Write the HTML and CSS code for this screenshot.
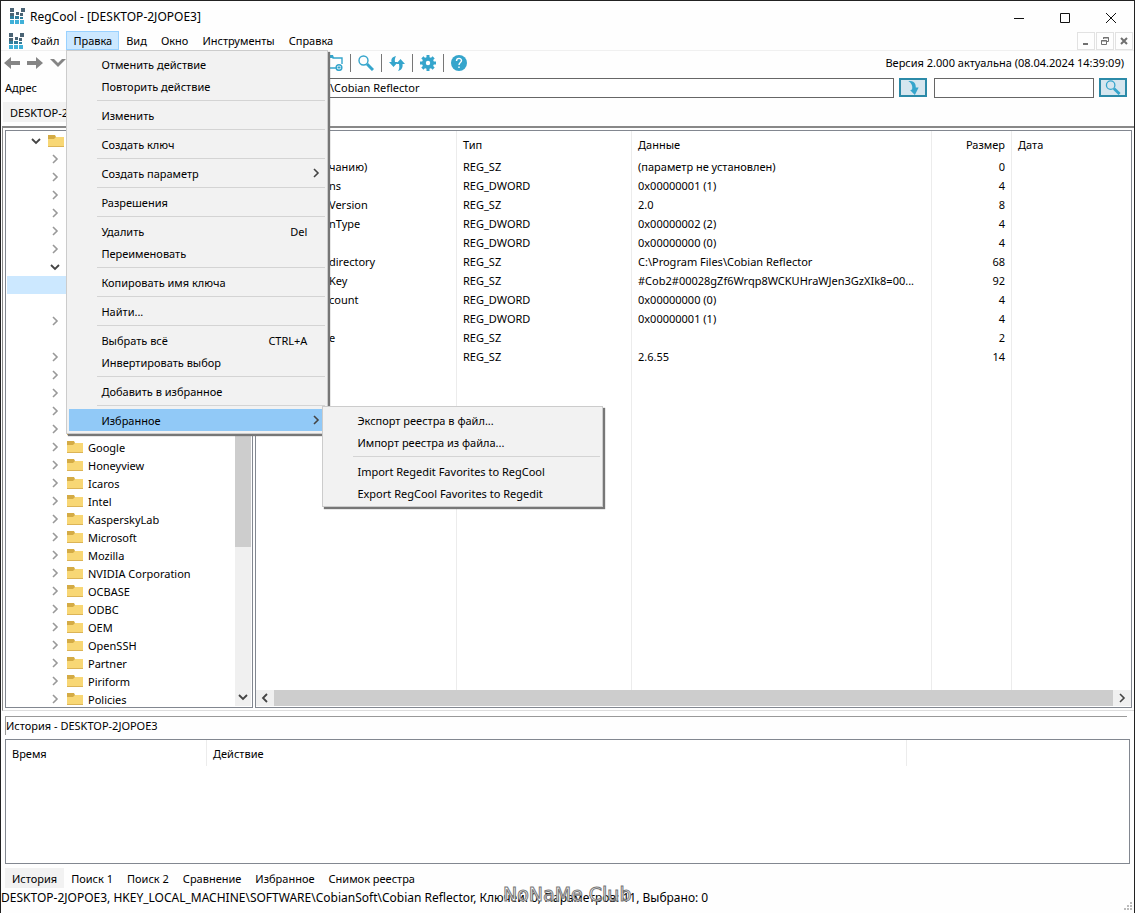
FILE: index.html
```html
<!DOCTYPE html>
<html lang="ru">
<head>
    <meta charset="UTF-8">
    <meta name="viewport" content="width=device-width, initial-scale=1.0">
    <title>RegCool - [DESKTOP-2JOPOE3]</title>
    <link rel="stylesheet" href="styles.css">
</head>
<body>
    <!-- общие значки -->
    <svg class="defs" width="0" height="0" aria-hidden="true">
        <symbol id="logo" viewBox="0 0 16 16">
            <g fill="#4a6374"><path d="M1 0h4v4h-4zM12 0h4v4h-4zM7 4h3v3h-3zM1 5h4v3h-4zM11 5h3v3h-3z"/></g>
            <g fill="#2f7d9c"><path d="M1 8h4v3h-4zM6 8h4v3h-4zM11 9h3v2h-3z"/></g>
            <g fill="#3fb0d8"><path d="M1 12h4v4h-4zM6 12h4v4h-4zM11 12h4v4h-4z"/></g>
        </symbol>
        <symbol id="folder" viewBox="0 0 17 14">
            <path fill="#d4ab45" d="M0 1h7l1 2h8v3H0z"/>
            <path fill="#f8d775" d="M0 5h6l2-2h8v10H0z"/>
            <path fill="#dcb456" d="M0 12h16v1H0z"/>
        </symbol>
        <symbol id="right" viewBox="0 0 10 10">
            <path d="M3 1l4 4l-4 4" fill="none" stroke="currentColor" stroke-width="1.600"/>
        </symbol>
        <symbol id="down" viewBox="0 0 10 10">
            <path d="M1 3l4 4l4-4" fill="none" stroke="currentColor" stroke-width="1.800"/>
        </symbol>
        <symbol id="left" viewBox="0 0 10 10">
            <path d="M7 1l-4 4l4 4" fill="none" stroke="currentColor" stroke-width="1.800"/>
        </symbol>
        <symbol id="lens" viewBox="0 0 16 16">
            <circle cx="5.500" cy="5.500" r="4.500" fill="none" stroke="currentColor" stroke-width="1.400"/>
            <path d="M9 9l6 6" stroke="currentColor" stroke-width="3"/>
        </symbol>
    </svg>

    <div class="window">
        <header class="titlebar">
            <svg class="logo"><use href="#logo"/></svg>
            <h1>RegCool - [DESKTOP-2JOPOE3]</h1>
            <div class="win-buttons">
                <button aria-label="Свернуть"><svg viewBox="0 0 12 12"><path d="M1 6.500h10"/></svg></button>
                <button aria-label="Развернуть"><svg viewBox="0 0 12 12"><path d="M1.500 1.500h9v9h-9z"/></svg></button>
                <button aria-label="Закрыть"><svg viewBox="0 0 12 12"><path d="M1 1l10 10M11 1l-10 10"/></svg></button>
            </div>
        </header>

        <nav class="menubar">
            <svg class="logo"><use href="#logo"/></svg>
            <button>Файл</button>
            <div class="menu-holder">
                <button class="open">Правка</button>
                <div class="menu">
                    <button>Отменить действие</button>
                    <button>Повторить действие</button>
                    <hr>
                    <button>Изменить</button>
                    <hr>
                    <button>Создать ключ</button>
                    <hr>
                    <button>Создать параметр<svg class="arrow"><use href="#right"/></svg></button>
                    <hr>
                    <button>Разрешения</button>
                    <hr>
                    <button>Удалить<kbd>Del</kbd></button>
                    <button>Переименовать</button>
                    <hr>
                    <button>Копировать имя ключа</button>
                    <hr>
                    <button>Найти...</button>
                    <hr>
                    <button>Выбрать всё<kbd>CTRL+A</kbd></button>
                    <button>Инвертировать выбор</button>
                    <hr>
                    <button>Добавить в избранное</button>
                    <hr>
                    <button class="active">Избранное<svg class="arrow"><use href="#right"/></svg></button>
                    <div class="menu submenu">
                        <button>Экспорт реестра в файл...</button>
                        <button>Импорт реестра из файла...</button>
                        <hr>
                        <button>Import Regedit Favorites to RegCool</button>
                        <button>Export RegCool Favorites to Regedit</button>
                    </div>
                </div>
            </div>
            <button>Вид</button>
            <button>Окно</button>
            <button>Инструменты</button>
            <button>Справка</button>
            <div class="mdi-buttons">
                <button aria-label="Свернуть документ"><svg viewBox="0 0 10 10"><path d="M2 8h5" stroke-width="2"/></svg></button>
                <button aria-label="Восстановить документ"><svg viewBox="0 0 10 10"><path d="M3.500 3V1.500h5v4H7M1.500 4.500h5v4h-5zM1 5h6M3 2h6"/></svg></button>
                <button aria-label="Закрыть документ"><svg viewBox="0 0 10 10"><path d="M2 2l6 6M8 2l-6 6" stroke-width="2"/></svg></button>
            </div>
        </nav>

        <div class="toolbar">
            <div class="history-nav">
                <button aria-label="Назад"><svg viewBox="0 0 16 12"><path d="M0 6l7-6v4h9v4H7v4z"/></svg></button>
                <button aria-label="Вперёд"><svg viewBox="0 0 16 12"><path d="M16 6L9 0v4H0v4h9v4z"/></svg></button>
                <button aria-label="Список"><svg viewBox="0 0 16 12"><path d="M0 2h4l4 4l4-4h4l-8 8z"/></svg></button>
            </div>
            <div class="tools">
                <button aria-label="Новый ключ">
                    <svg viewBox="0 0 16 16"><path d="M0 1h5l1 2h9v6M0 13h9" fill="none" stroke="currentColor" stroke-width="1.400"/><path d="M0 0h6l1 3H0z" fill="currentColor"/><circle cx="12" cy="12.500" r="2.800" fill="#fff" stroke="currentColor" stroke-width="1.500"/><path d="M10.500 12.500h3M12 11v3" stroke="currentColor"/></svg>
                </button>
                <button aria-label="Найти"><svg><use href="#lens"/></svg></button>
                <button aria-label="Обновить">
                    <svg viewBox="0 0 16 16"><g fill="currentColor"><path d="M7 1C3 2 2 4 2.500 7H0l4.500 5L9 7H6C5.500 5 6 3 7 1z"/><path d="M9 16c4-1 5-4 4.500-7H16l-4.500-5L7 9h3c.5 3 .5 5-1 7z"/></g></svg>
                </button>
                <button aria-label="Настройки">
                    <svg viewBox="0 0 16 16"><g fill="currentColor"><circle cx="8" cy="8" r="6"/><path d="M6.500 0h3v16h-3zM0 6.500h16v3H0zM1.300 3.400l2.100-2.100L14.700 12.600l-2.100 2.100zM12.600 1.300l2.100 2.100L3.400 14.700l-2.100-2.100z"/></g><circle cx="8" cy="8" r="2.200" fill="#fff"/></svg>
                </button>
                <button aria-label="Справка">
                    <svg viewBox="0 0 16 16"><circle cx="8" cy="8" r="8" fill="currentColor"/><path d="M5.500 6c0-3.600 5-3.200 5-.5C10.500 7.500 8 7.500 8 10M8 11.500v1.500" fill="none" stroke="#fff" stroke-width="1.400"/></svg>
                </button>
            </div>
            <p class="version">Версия 2.000 актуальна (08.04.2024 14:39:09)</p>
        </div>

        <div class="address">
            <label for="path">Адрес</label>
            <input id="path" class="path" type="text" value="\Cobian Reflector">
            <button aria-label="Перейти"><svg viewBox="0 0 16 16"><path fill="#35a5cc" d="M3 1c6 0 8 2 8 7h3l-4 8l-5-5l2-1C8 6 6 3 3 1z"/></svg></button>
            <input class="search" type="text" aria-label="Поиск">
            <button aria-label="Искать"><svg><use href="#lens"/></svg></button>
        </div>

        <div class="doc-tabs"><button>DESKTOP-2JOPOE3</button></div>

        <main class="workspace">
            <section class="pane tree">
                <ul>
                    <li class="root"><svg class="chev dark"><use href="#down"/></svg><svg class="folder"><use href="#folder"/></svg></li>
                    <li><svg class="chev"><use href="#right"/></svg></li>
                    <li><svg class="chev"><use href="#right"/></svg></li>
                    <li><svg class="chev"><use href="#right"/></svg></li>
                    <li><svg class="chev"><use href="#right"/></svg></li>
                    <li><svg class="chev"><use href="#right"/></svg></li>
                    <li><svg class="chev"><use href="#right"/></svg></li>
                    <li><svg class="chev dark"><use href="#down"/></svg></li>
                    <li class="selected"></li>
                    <li></li>
                    <li><svg class="chev"><use href="#right"/></svg></li>
                    <li></li>
                    <li><svg class="chev"><use href="#right"/></svg></li>
                    <li><svg class="chev"><use href="#right"/></svg></li>
                    <li><svg class="chev"><use href="#right"/></svg></li>
                    <li><svg class="chev"><use href="#right"/></svg></li>
                    <li><svg class="chev"><use href="#right"/></svg><svg class="folder"><use href="#folder"/></svg></li>
                    <li><svg class="chev"><use href="#right"/></svg><svg class="folder"><use href="#folder"/></svg>Google</li>
                    <li><svg class="chev"><use href="#right"/></svg><svg class="folder"><use href="#folder"/></svg>Honeyview</li>
                    <li><svg class="chev"><use href="#right"/></svg><svg class="folder"><use href="#folder"/></svg>Icaros</li>
                    <li><svg class="chev"><use href="#right"/></svg><svg class="folder"><use href="#folder"/></svg>Intel</li>
                    <li><svg class="chev"><use href="#right"/></svg><svg class="folder"><use href="#folder"/></svg>KasperskyLab</li>
                    <li><svg class="chev"><use href="#right"/></svg><svg class="folder"><use href="#folder"/></svg>Microsoft</li>
                    <li><svg class="chev"><use href="#right"/></svg><svg class="folder"><use href="#folder"/></svg>Mozilla</li>
                    <li><svg class="chev"><use href="#right"/></svg><svg class="folder"><use href="#folder"/></svg>NVIDIA Corporation</li>
                    <li><svg class="chev"><use href="#right"/></svg><svg class="folder"><use href="#folder"/></svg>OCBASE</li>
                    <li><svg class="chev"><use href="#right"/></svg><svg class="folder"><use href="#folder"/></svg>ODBC</li>
                    <li><svg class="chev"><use href="#right"/></svg><svg class="folder"><use href="#folder"/></svg>OEM</li>
                    <li><svg class="chev"><use href="#right"/></svg><svg class="folder"><use href="#folder"/></svg>OpenSSH</li>
                    <li><svg class="chev"><use href="#right"/></svg><svg class="folder"><use href="#folder"/></svg>Partner</li>
                    <li><svg class="chev"><use href="#right"/></svg><svg class="folder"><use href="#folder"/></svg>Piriform</li>
                    <li><svg class="chev"><use href="#right"/></svg><svg class="folder"><use href="#folder"/></svg>Policies</li>
                </ul>
                <div class="vscroll">
                    <div class="thumb"></div>
                    <svg><use href="#down"/></svg>
                </div>
            </section>

            <section class="pane values">
                <div class="table-wrap">
                    <table>
                        <colgroup><col class="c-name"><col class="c-type"><col class="c-data"><col class="c-size"><col></colgroup>
                        <thead>
                            <tr><th></th><th>Тип</th><th>Данные</th><th>Размер</th><th>Дата</th></tr>
                        </thead>
                        <tbody>
                            <tr><td>чанию)</td><td>REG_SZ</td><td>(параметр не установлен)</td><td>0</td><td></td></tr>
                            <tr><td>ns</td><td>REG_DWORD</td><td>0x00000001 (1)</td><td>4</td><td></td></tr>
                            <tr><td>Version</td><td>REG_SZ</td><td>2.0</td><td>8</td><td></td></tr>
                            <tr><td>nType</td><td>REG_DWORD</td><td>0x00000002 (2)</td><td>4</td><td></td></tr>
                            <tr><td></td><td>REG_DWORD</td><td>0x00000000 (0)</td><td>4</td><td></td></tr>
                            <tr><td>directory</td><td>REG_SZ</td><td>C:\Program Files\Cobian Reflector</td><td>68</td><td></td></tr>
                            <tr><td>Key</td><td>REG_SZ</td><td>#Cob2#00028gZf6Wrqp8WCKUHraWJen3GzXIk8=00...</td><td>92</td><td></td></tr>
                            <tr><td>count</td><td>REG_DWORD</td><td>0x00000000 (0)</td><td>4</td><td></td></tr>
                            <tr><td></td><td>REG_DWORD</td><td>0x00000001 (1)</td><td>4</td><td></td></tr>
                            <tr><td>e</td><td>REG_SZ</td><td></td><td>2</td><td></td></tr>
                            <tr><td></td><td>REG_SZ</td><td>2.6.55</td><td>14</td><td></td></tr>
                            <tr class="filler"><td></td><td></td><td></td><td></td><td></td></tr>
                        </tbody>
                    </table>
                </div>
                <div class="hscroll">
                    <svg><use href="#left"/></svg>
                    <div class="thumb"></div>
                    <svg><use href="#right"/></svg>
                </div>
            </section>
        </main>

        <section class="history">
            <h2>История - DESKTOP-2JOPOE3</h2>
            <div class="history-box">
                <table>
                    <colgroup><col class="c-time"><col class="c-action"><col></colgroup>
                    <thead><tr><th>Время</th><th>Действие</th><th></th></tr></thead>
                </table>
            </div>
        </section>

        <div class="bottom-tabs">
            <button class="current">История</button>
            <button>Поиск 1</button>
            <button>Поиск 2</button>
            <button>Сравнение</button>
            <button>Избранное</button>
            <button>Снимок реестра</button>
        </div>

        <footer class="status">
            <p>DESKTOP-2JOPOE3, HKEY_LOCAL_MACHINE\SOFTWARE\CobianSoft\Cobian Reflector, Ключей: 0, Параметров: 11, Выбрано: 0</p>
            <svg class="grip" viewBox="0 0 9 9"><path d="M6 0h2v2h-2zM3 3h2v2h-2zM6 3h2v2h-2zM0 6h2v2h-2zM3 6h2v2h-2zM6 6h2v2h-2z"/></svg>
            <span class="watermark">NoNaMe Club</span>
        </footer>
    </div>
</body>
</html>
```
FILE: styles.css
```css
*{
    margin: 0;
    padding: 0;
    box-sizing: border-box;
}
body, button, input, kbd{
    font-family: "Noto Sans", "Open Sans", sans-serif;
    font-size: 11px;
    color: #000;
}
button{
    background: none;
    border: none;
    white-space: nowrap;
}
h1, h2, th{
    font-size: 11px;
    font-weight: normal;
}
.defs{
    position: absolute;
}
.window{
    display: flex;
    flex-direction: column;
    height: 100vh;
    min-height: 840px;
    background-color: #fefefe;
    border: 1px solid #222;
    border-bottom: none;
    overflow: hidden;
}
.logo{
    width: 16px;
    height: 16px;
    flex: none;
}

/* заголовок окна */
.titlebar{
    display: flex;
    align-items: center;
    height: 30px;
    padding-left: 8px;
    gap: 5px;
}
.titlebar h1{
    font-size: 12px;
}
.win-buttons{
    display: flex;
    margin-left: auto;
}
.win-buttons button{
    width: 46px;
    height: 28px;
}
.win-buttons svg{
    width: 12px;
    height: 12px;
    fill: none;
    stroke: #111;
    vertical-align: middle;
}

/* строка меню */
.menubar{
    display: flex;
    align-items: center;
    height: 20px;
    padding-left: 7px;
    border-bottom: 1px solid #f0f0f0;
}
.menubar > button, .menu-holder > button{
    height: 19px;
    padding: 0 7px;
}
.menu-holder{
    position: relative;
}
.menu-holder > .open{
    display: block;
    padding: 0 6px;
    background-color: #cce8ff;
    border: 1px solid #99d1ff;
}
.menu{
    position: absolute;
    z-index: 10;
    top: 19px;
    left: 0;
    width: 262px;
    padding: 2px;
    background-color: #f2f2f2;
    border: 1px solid #ccc;
    box-shadow: 2px 2px 1px #777;
}
.menu > button{
    display: flex;
    align-items: center;
    width: 100%;
    height: 22px;
    padding: 0 8px 0 32px;
}
.menu > .active{
    background-color: #91c9f7;
}
.menu hr{
    height: 1px;
    margin: 3px 0 3px 28px;
    border: none;
    background-color: #d4d4d4;
}
.menu kbd{
    margin-left: auto;
    margin-right: 10px;
}
.arrow{
    width: 10px;
    height: 10px;
    margin-left: auto;
    margin-right: -4px;
    color: #444;
}
.menu > .active .arrow{
    margin-right: -4px;
}
.submenu{
    top: auto;
    bottom: -74px;
    left: 255px;
    width: 281px;
}
.mdi-buttons{
    display: flex;
    gap: 1px;
    margin-left: auto;
    margin-right: 1px;
}
.mdi-buttons button{
    width: 18px;
    height: 18px;
    border: 1px solid #e2e2e2;
}
.mdi-buttons svg{
    display: block;
    width: 10px;
    height: 10px;
    margin: auto;
    fill: none;
    stroke: #707070;
}

/* панель инструментов */
.toolbar{
    display: flex;
    align-items: center;
    height: 23px;
    padding: 0 10px 0 3px;
}
.history-nav{
    display: flex;
    gap: 7px;
    width: 315px;
}
.history-nav button{
    width: 16px;
    height: 12px;
}
.history-nav svg{
    display: block;
    width: 16px;
    height: 12px;
    fill: #858585;
}
.tools{
    display: flex;
}
.tools button{
    width: 31px;
    height: 18px;
    color: #35a5cc;
}
.tools button + button{
    border-left: 1px solid #777;
}
.tools svg{
    display: block;
    width: 16px;
    height: 16px;
    margin: auto;
}
.version{
    margin-left: auto;
}
.address{
    display: flex;
    align-items: center;
    height: 27px;
    padding: 0 7px 0 4px;
}
.address label{
    width: 70px;
}
.address input{
    height: 20px;
    border: 1px solid #666;
    background-color: #fff;
}
.address .path{
    flex: 1;
    min-width: 0;
    padding-left: 254px;
}
.address .search{
    width: 160px;
}
.address button{
    width: 28px;
    height: 19px;
    margin: 0 7px 0 5px;
    border: 2px solid #2b8aa8;
    background-color: #d5e6ef;
    color: #35a5cc;
}
.address button:last-child{
    margin-right: 0;
}
.address svg{
    display: block;
    width: 16px;
    height: 15px;
    margin: auto;
}
.doc-tabs{
    height: 25px;
    padding: 1px 0 0 2px;
}
.doc-tabs button{
    height: 20px;
    padding: 0 7px;
    background-color: #f2f2f2;
}

/* рабочая область: дерево и значения */
.workspace{
    display: flex;
    flex: 1;
    min-height: 0;
    gap: 2px;
    margin-left: 1px;
    padding: 2px 2px 2px 2px;
    border-top: 2px solid #888;
    border-left: 1px solid #888;
    border-bottom: 1px solid #ddd;
}
.pane{
    display: flex;
    background-color: #fff;
    border: 1px solid #828790;
    overflow: hidden;
}
.tree{
    width: 248px;
    flex: none;
    padding: 1px;
}
.tree ul{
    flex: 1;
    list-style: none;
}
.tree li{
    display: flex;
    align-items: center;
    height: 18px;
    padding-left: 43px;
}
.tree .root{
    padding-left: 24px;
}
.tree .selected{
    background-color: #cce8ff;
}
.chev{
    width: 10px;
    height: 10px;
    margin-right: 7px;
    color: #999;
}
.dark{
    color: #444;
}
.folder{
    width: 17px;
    height: 14px;
    margin-right: 4px;
}
.vscroll{
    display: flex;
    flex-direction: column;
    align-items: center;
    width: 16px;
    padding: 17px 0 4px;
    background-color: #f0f0f0;
}
.vscroll .thumb{
    width: 16px;
    height: 398px;
    background-color: #cdcdcd;
}
.vscroll svg{
    width: 10px;
    height: 10px;
    margin-top: auto;
    color: #444;
}
.values{
    flex: 1;
    flex-direction: column;
    min-width: 0;
}
.table-wrap{
    flex: 1;
    min-height: 0;
}
table{
    width: 100%;
    table-layout: fixed;
    border-collapse: separate;
    border-spacing: 0;
}
th{
    text-align: left;
}
th, td{
    padding: 0 6px;
    white-space: nowrap;
    overflow: hidden;
    border-right: 1px solid #ececec;
}
th:last-child, td:last-child{
    border-right: none;
}
.values table{
    height: 100%;
}
.values th{
    height: 26px;
}
.values td{
    height: 19px;
}
.values .filler td{
    height: auto;
}
.values td:first-child{
    padding-left: 73px;
}
.values th:nth-child(4), .values td:nth-child(4){
    text-align: right;
}
.c-name{
    width: 201px;
}
.c-type{
    width: 175px;
}
.c-data{
    width: 300px;
}
.c-size{
    width: 80px;
}
.hscroll{
    display: flex;
    align-items: center;
    height: 16px;
    margin-bottom: 1px;
    padding: 0 4px;
    gap: 4px;
    background-color: #f0f0f0;
}
.hscroll .thumb{
    flex: 1;
    height: 16px;
    background-color: #cdcdcd;
}
.hscroll svg{
    width: 10px;
    height: 10px;
    color: #444;
}

/* история */
.history{
    padding: 5px 4px 0;
}
.history h2{
    height: 19px;
    margin-right: 3px;
    border-top: 1px solid #999;
    border-left: 1px solid #999;
    line-height: 18px;
}
.history-box{
    height: 125px;
    margin-top: 4px;
    border: 1px solid #828790;
    background-color: #fff;
}
.history-box th{
    height: 26px;
}
.c-time{
    width: 201px;
}
.c-action{
    width: 700px;
}
.bottom-tabs{
    display: flex;
    padding: 4px 4px 0;
}
.bottom-tabs button{
    height: 20px;
    padding: 0 7px;
}
.bottom-tabs .current{
    background-color: #f2f2f2;
}
.status{
    display: flex;
    align-items: flex-end;
    justify-content: space-between;
    position: relative;
    height: 25px;
}
.status p{
    align-self: flex-start;
    font-size: 12px;
    line-height: 20px;
    white-space: nowrap;
}
.grip{
    width: 9px;
    height: 9px;
    margin: 0 1px 2px 0;
    fill: #bbb;
}
.watermark{
    position: absolute;
    left: 502px;
    top: -5px;
    font-family: "DejaVu Sans", sans-serif;
    font-size: 19px;
    line-height: 22px;
    color: #fff;
    -webkit-text-stroke: 1px #777;
}
```
